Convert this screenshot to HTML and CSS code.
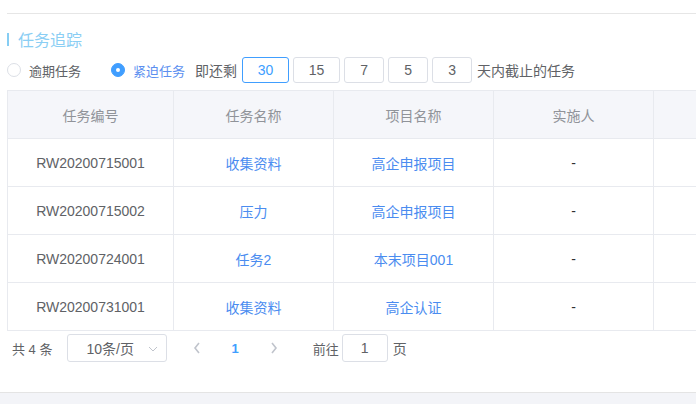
FILE: index.html
```html
<!DOCTYPE html>
<html lang="zh">
<head>
<meta charset="utf-8">
<link rel="stylesheet" href="styles.css">
</head>
<body>
<div class="page">
  <div class="topline"></div>
  <div class="title"><span class="bar"></span><span>任务追踪</span></div>
  <div class="filters">
    <label class="radio"><span class="circle"></span><span class="rlabel">逾期任务</span></label>
    <label class="radio checked"><span class="circle"></span><span class="rlabel">紧迫任务</span></label>
    <span class="pre">即还剩</span>
    <div class="days">
      <button class="day active wide">30</button>
      <button class="day wide">15</button>
      <button class="day">7</button>
      <button class="day">5</button>
      <button class="day">3</button>
    </div>
    <span class="post">天内截止的任务</span>
  </div>
  <div class="tablewrap">
    <table class="grid">
      <colgroup>
        <col class="c1"><col class="c2"><col class="c2"><col class="c2"><col class="c2"><col class="c3">
      </colgroup>
      <thead>
        <tr><th>任务编号</th><th>任务名称</th><th>项目名称</th><th>实施人</th><th></th><th></th></tr>
      </thead>
      <tbody>
        <tr><td>RW20200715001</td><td class="link">收集资料</td><td class="link">高企申报项目</td><td class="dash">-</td><td></td><td></td></tr>
        <tr><td>RW20200715002</td><td class="link">压力</td><td class="link">高企申报项目</td><td class="dash">-</td><td></td><td></td></tr>
        <tr><td>RW20200724001</td><td class="link">任务2</td><td class="link">本末项目001</td><td class="dash">-</td><td></td><td></td></tr>
        <tr><td>RW20200731001</td><td class="link">收集资料</td><td class="link">高企认证</td><td class="dash">-</td><td></td><td></td></tr>
      </tbody>
    </table>
  </div>
  <div class="pager">
    <span class="total">共 4 条</span>
    <div class="size"><span>10条/页</span>
      <svg class="chev" width="10" height="6" viewBox="0 0 10 6"><path d="M1 1 L5 5 L9 1" fill="none" stroke="#c0c4cc" stroke-width="1"/></svg>
    </div>
    <svg class="arrow prev" width="8" height="12" viewBox="0 0 8 12"><path d="M6 1 L2 6 L6 11" fill="none" stroke="#c0c4cc" stroke-width="1.6"/></svg>
    <span class="num">1</span>
    <svg class="arrow next" width="8" height="12" viewBox="0 0 8 12"><path d="M2 1 L6 6 L2 11" fill="none" stroke="#c0c4cc" stroke-width="1.6"/></svg>
    <span class="goto">前往</span>
    <div class="jump">1</div>
    <span class="pg">页</span>
  </div>
</div>
<div class="footer"></div>
</body>
</html>
```
FILE: styles.css
```css
html, body { margin: 0; padding: 0; background: #fff; }
body {
  font-family: "Liberation Sans", "Noto Sans CJK SC", sans-serif;
  font-size: 14px;
  color: #606266;
  width: 696px;
  height: 404px;
  overflow: hidden;
  display: flex;
  flex-direction: column;
}
.page { padding-left: 7px; height: 392px; overflow: hidden; }
.topline { height: 13px; border-bottom: 1px solid #e6e6e6; }
.title {
  display: flex; align-items: center;
  height: 20px; margin-top: 15px;
  font-size: 16px; color: #8acef4;
}
.bar { width: 2px; height: 13px; background: #86cdf3; margin-right: 9px; }
.filters { display: flex; align-items: center; height: 26px; margin-top: 8px; }
.radio { display: flex; align-items: center; font-size: 13px; color: #606266; }
.radio .circle {
  width: 12px; height: 12px; border: 1px solid #dcdfe6; border-radius: 50%;
  box-sizing: content-box; background: #fff; position: relative;
}
.radio.checked .circle { background: #409eff; border-color: #409eff; }
.radio.checked .circle::after {
  content: ""; position: absolute; left: 4px; top: 4px; width: 4px; height: 4px;
  background: #fff; border-radius: 50%;
}
.rlabel { margin-left: 8px; }
.radio + .radio { margin-left: 30px; }
.radio.checked .rlabel { color: #5b8ff0; }
.pre { margin-left: 10px; color: #606266; font-size: 14px; }
.days { display: flex; gap: 4px; margin-left: 5px; }
.day {
  width: 40px; height: 26px; border: 1px solid #dcdfe6; border-radius: 3px;
  background: #fff; font: inherit; font-size: 14px; color: #606266; padding: 0;
}
.day.wide { width: 47px; }
.day.active { border-color: #409eff; color: #409eff; }
.post { margin-left: 5px; color: #606266; }
.tablewrap { margin-top: 7px; overflow: hidden; }
.grid { border-collapse: collapse; table-layout: fixed; width: 806px; }
.c1 { width: 166px; }
.c2 { width: 160px; }
.c3 { width: 160px; }
.grid th, .grid td {
  border: 1px solid #e8eaef; height: 47px; padding: 0; text-align: center;
  font-weight: normal; font-size: 14px;
}
.grid th { background: #f5f6fa; color: #909399; }
.grid td { color: #606266; }
.grid td.link { color: #4a8cf0; }
.grid td.dash { color: #303133; }
.pager { display: flex; align-items: center; height: 28px; margin-top: 3px; font-size: 13px; }
.total { margin-left: 5px; color: #606266; }
.size {
  margin-left: 15px; width: 98px; height: 26px; border: 1px solid #dcdfe6; border-radius: 3px;
  display: flex; align-items: center; position: relative; font-size: 14px;
}
.size span { margin-left: 18px; }
.chev { position: absolute; right: 8px; top: 11px; }
.arrow.prev { margin-left: 26px; }
.num { margin-left: 30px; color: #409eff; font-weight: bold; }
.arrow.next { margin-left: 31px; }
.goto { margin-left: 35px; color: #606266; }
.jump {
  margin-left: 3px; width: 44px; height: 26px; border: 1px solid #dcdfe6; border-radius: 3px;
  display: flex; align-items: center; justify-content: center; font-size: 14px;
}
.pg { margin-left: 5px; font-size: 14px; }
.footer { flex: 1; border-top: 1px solid #e4e4e4; background: #f3f4f8; }
```
